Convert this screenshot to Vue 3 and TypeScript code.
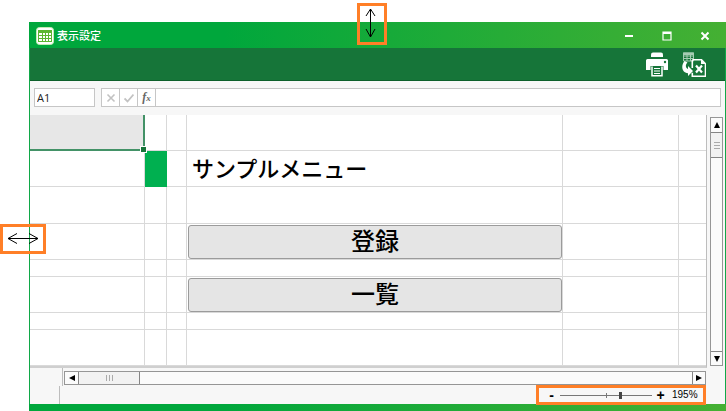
<script setup lang="ts">
import { computed, ref } from 'vue'

interface MenuRow {
  height: string
  kind: 'first' | 'title' | 'plain' | 'button'
  label?: string
}

const cellName = ref('A1')
const formula = ref('')
const zoom = ref(195)

const rows: MenuRow[] = [
  { height: 'mid', kind: 'first' },
  { height: 'mid', kind: 'title', label: 'サンプルメニュー' },
  { height: 'tall', kind: 'plain' },
  { height: 'mid', kind: 'button', label: '登録' },
  { height: 'short', kind: 'plain' },
  { height: 'mid', kind: 'button', label: '一覧' },
  { height: 'short', kind: 'plain' },
  { height: 'mid', kind: 'plain' },
]

// 100% sits in the middle of the slider: 10-100 on the left half, 100-400 on the right.
const sliderPosition = computed<number>({
  get: () => (zoom.value <= 100 ? ((zoom.value - 10) / 90) * 50 : 50 + ((zoom.value - 100) / 300) * 50),
  set: (p) => {
    zoom.value = Math.round(p <= 50 ? 10 + (p / 50) * 90 : 100 + ((p - 50) / 50) * 300)
  },
})

function step(amount: number) {
  zoom.value = Math.min(400, Math.max(10, zoom.value + amount))
}
</script>

<template>
  <div class="page">
    <main class="window">
      <header class="titlebar">
        <svg class="app-icon" viewBox="0 0 18 18" aria-hidden="true">
          <rect x="0.5" y="0.5" width="17" height="17" rx="3" fill="#fff" stroke="#c5eab5" />
          <rect x="2" y="3" width="14" height="12" fill="#5cb531" />
          <path d="M3 6h3v2H3zM7 6h2v2H7zM10 6h2v2h-2zM13 6h2v2h-2zM3 9h3v2H3zM7 9h2v2H7zM10 9h2v2h-2zM13 9h2v2h-2zM3 12h3v2H3zM7 12h2v2H7zM10 12h2v2h-2zM13 12h2v2h-2z" fill="#fff" />
        </svg>
        <h1 class="title">表示設定</h1>
        <div class="controls">
          <button type="button" aria-label="最小化">
            <svg viewBox="0 0 10 10"><path d="M1 5h8" stroke="#fff" stroke-width="2" /></svg>
          </button>
          <button type="button" aria-label="最大化">
            <svg viewBox="0 0 10 10"><path d="M1 1h8v8H1z" fill="none" stroke="#fff" stroke-width="1.2" /><path d="M1 1h8v2H1z" fill="#fff" /></svg>
          </button>
          <button type="button" aria-label="閉じる">
            <svg viewBox="0 0 10 10"><path d="M1.500 1.500l7 7M8.500 1.500l-7 7" stroke="#fff" stroke-width="2" /></svg>
          </button>
        </div>
      </header>

      <div class="toolbar">
        <button type="button" aria-label="印刷">
          <svg class="print" viewBox="0 0 22 25">
            <path d="M5 5V2.500Q5 0.500 7 0.500h8Q17 0.500 17 2.500V5z" fill="#fff" />
            <path d="M1.500 7h19Q22 7 22 8.500V18h-4.500v-4h-13v4H0V8.500Q0 7 1.500 7z" fill="#fff" />
            <circle cx="19" cy="10" r="1.200" fill="#167539" />
            <path d="M6 14.500v9.300h10v-9.300" fill="none" stroke="#fff" stroke-width="1.500" />
            <path d="M8 16.500h6M8 19h6M8 21.500h6" stroke="#fff" stroke-width="1.200" />
          </svg>
        </button>
        <button type="button" aria-label="Excel出力">
          <svg class="export" viewBox="0 0 24 25">
            <path d="M1.500 1h10v8h-10zM1.500 4h10M1.500 6.500h10M5 2v7M8.500 2v7" fill="none" stroke="#a5cdb2" stroke-width="1" />
            <path d="M1 0.500h11v2.500H1z" fill="#a5cdb2" />
            <path d="M2.500 9C-1.500 14 0 20.500 6 21.200V24l5-5-5-5v3C3.500 16 3 13 5.500 10.500z" fill="#fff" />
            <path d="M10.300 7.800h9.200l4 4v12.400H10.300v-3.500M10.300 8v8" fill="none" stroke="#fff" stroke-width="1.600" />
            <path d="M19 7.500v4.500h4.500z" fill="#fff" />
            <path d="M14 13.500l6 7M20 13.500l-6 7" stroke="#fff" stroke-width="2.200" />
          </svg>
        </button>
      </div>

      <div class="formula-bar">
        <input v-model="cellName" class="name-box" aria-label="セル名" />
        <div class="formula">
          <button type="button" aria-label="キャンセル">
            <svg viewBox="0 0 10 10"><path d="M1.500 1.500l7 7M8.500 1.500l-7 7" stroke="#c2c2c2" stroke-width="1.600" /></svg>
          </button>
          <button type="button" aria-label="入力">
            <svg viewBox="0 0 10 10"><path d="M0.500 5.500l3 3 6-7" fill="none" stroke="#c2c2c2" stroke-width="1.800" /></svg>
          </button>
          <button type="button" class="fx" aria-label="関数の挿入"><span>f</span><small>x</small></button>
          <input v-model="formula" class="formula-input" aria-label="数式" />
        </div>
      </div>

      <div class="sheet-area">
        <table class="sheet">
          <colgroup>
            <col class="col-a" />
            <col class="col-b" />
            <col class="col-c" />
            <col />
            <col class="col-e" />
            <col class="col-f" />
          </colgroup>
          <tbody>
            <tr v-for="(row, i) in rows" :key="i" :class="row.height">
              <td :class="{ selected: row.kind === 'first' }"></td>
              <td :class="{ marker: row.kind === 'title' }"></td>
              <td></td>
              <td :class="{ heading: row.kind === 'title', action: row.kind === 'button' }">
                <button v-if="row.kind === 'button'" type="button">{{ row.label }}</button>
                <template v-else>{{ row.label }}</template>
              </td>
              <td></td>
              <td></td>
            </tr>
          </tbody>
        </table>
        <div class="scroll vertical">
          <button type="button" aria-label="上へ"><svg viewBox="0 0 8 8"><path d="M4 1l3 6H1z" /></svg></button>
          <div class="thumb"><i></i></div>
          <div class="track"></div>
          <button type="button" aria-label="下へ"><svg viewBox="0 0 8 8"><path d="M4 7L1 1h6z" /></svg></button>
        </div>
      </div>

      <div class="scroll-row">
        <div class="scroll horizontal">
          <button type="button" aria-label="左へ"><svg viewBox="0 0 8 8"><path d="M1 4l6-3v6z" /></svg></button>
          <div class="thumb"><i></i></div>
          <div class="track"></div>
          <button type="button" aria-label="右へ"><svg viewBox="0 0 8 8"><path d="M7 4L1 1v6z" /></svg></button>
        </div>
      </div>

      <footer class="status">
        <div class="status-left"></div>
        <div class="zoom">
          <button type="button" aria-label="縮小" @click="step(-5)">-</button>
          <input v-model.number="sliderPosition" type="range" min="0" max="100" step="any" aria-label="ズーム" />
          <button type="button" aria-label="拡大" @click="step(5)">+</button>
          <output>{{ zoom }}%</output>
        </div>
      </footer>
      <div class="bottom-edge"></div>
    </main>

    <div class="resize resize-y">
      <svg viewBox="0 0 24 36"><path d="M10.500 3v28M6 10l4.500-7 4.500 7M6 23l4.500 8 4.500-8" fill="none" stroke="#000" stroke-width="1" /></svg>
    </div>
    <div class="resize resize-x">
      <svg viewBox="0 0 40 24"><path d="M5 11.500h30M14 6.500l-9 5 9 5M26 6.500l9 5-9 5" fill="none" stroke="#000" stroke-width="1" /></svg>
    </div>
  </div>
</template>

<style>
body {
  margin: 0;
  background: #fff;
}
</style>

<style scoped>
* {
  box-sizing: border-box;
}

.page {
  position: relative;
  padding: 22px 0 0 29px;
  font-family: "Liberation Sans", "Noto Sans CJK JP", sans-serif;
  color: #000;
}

button,
input {
  margin: 0;
  padding: 0;
  border: 0;
  border-radius: 0;
  background: none;
  color: inherit;
  font: inherit;
}

button {
  display: flex;
  align-items: center;
  justify-content: center;
}

.window {
  display: flex;
  flex-direction: column;
  border-right: 1px solid #10a848;
  border-left: 1px solid #10a848;
  background: #f7f7f7;
}

.titlebar {
  display: flex;
  align-items: center;
  height: 26px;
  margin: 0 -1px;
  padding: 1px 11px 0 7px;
  background: linear-gradient(90deg, #00a73c 28%, #45b033);
}

.app-icon {
  width: 18px;
  height: 18px;
}

.title {
  margin: 0 0 0 3px;
  color: #fff;
  font-size: 11px;
  font-weight: 500;
  line-height: 16px;
}

.controls {
  display: flex;
  gap: 18px;
  margin-left: auto;
}

.controls button {
  width: 20px;
  height: 24px;
}

.controls svg {
  width: 10px;
  height: 10px;
}

.toolbar {
  display: flex;
  align-items: center;
  justify-content: flex-end;
  gap: 14px;
  height: 33px;
  padding-right: 19px;
  border-bottom: 1px solid #0d5f2a;
  background: #167539;
}

.print {
  width: 22px;
  height: 25px;
}

.export {
  width: 24px;
  height: 25px;
}

.formula-bar {
  display: flex;
  gap: 6px;
  height: 34px;
  padding: 7px 4px 8px;
}

.name-box {
  width: 61px;
  padding-left: 2px;
  border: 1px solid #c6c6c6;
  background: #fff;
  color: #222;
  font-family: "Open Sans", sans-serif;
  font-size: 11px;
}

.formula {
  display: flex;
  flex: 1;
  border: 1px solid #c6c6c6;
  background: #fff;
}

.formula button {
  width: 18px;
  border-right: 1px solid #c6c6c6;
}

.formula svg {
  width: 10px;
  height: 10px;
}

.formula .fx {
  align-items: baseline;
  color: #666;
  font-family: "Liberation Serif", serif;
  font-size: 12px;
  font-style: italic;
  font-weight: 700;
  line-height: 16px;
}

.fx small {
  font-size: 9px;
}

.formula-input {
  flex: 1;
  min-width: 0;
  padding: 0 4px;
  font-size: 11px;
}

.sheet-area {
  display: flex;
  gap: 3px;
  padding-right: 2px;
}

.sheet {
  flex: 1;
  width: 0;
  table-layout: fixed;
  border-collapse: separate;
  border-spacing: 0;
  border-right: 1px solid #bdbdbd;
  border-bottom: 2px solid #cfcfcf;
  background: #fff;
}

.col-a { width: 115px; }
.col-b { width: 22px; }
.col-c { width: 20px; }
.col-e { width: 116px; }
.col-f { width: 27px; }

.short { height: 17px; }
.mid { height: 36px; }
.tall { height: 37px; }

td {
  padding: 0;
  border: solid #d9d9d9;
  border-width: 0 1px 1px 0;
}

td:last-child {
  border-right: 0;
}

td.selected {
  position: relative;
  border-color: #439267;
  background: #e7e7e7;
  box-shadow: inset -1px -1px #439267;
}

td.selected::after {
  position: absolute;
  right: -3px;
  bottom: -3px;
  width: 5px;
  height: 5px;
  border: 1px solid #fff;
  background: #167539;
  content: "";
}

td.marker {
  border-color: #00b050;
  background: #00b050;
}

.heading {
  padding: 3px 0 0 5px;
  font-size: 22px;
  font-weight: 500;
  line-height: 32px;
  white-space: nowrap;
}

.action button {
  width: calc(100% - 1px);
  height: 34px;
  margin: 0 0 0 1px;
  border: 1px solid #9b9b9b;
  border-radius: 3px;
  background: #e5e5e5;
  font-size: 24px;
  font-weight: 500;
  line-height: 32px;
}

.scroll {
  display: flex;
  border: 1px solid #969696;
  background: #fbfbfb;
}

.scroll svg {
  width: 8px;
  height: 8px;
}

.track {
  flex: 1;
}

.thumb {
  display: flex;
  align-items: center;
  justify-content: center;
  background: #f2f2f2;
}

.vertical {
  flex-direction: column;
  width: 13px;
  margin: 2px 0;
}

.vertical button {
  height: 14px;
}

.vertical .thumb {
  height: 26px;
  border: solid #858585;
  border-width: 1px 0;
}

.vertical button:last-child {
  border-top: 1px solid #858585;
}

.thumb i {
  width: 6px;
  height: 7px;
  background: repeating-linear-gradient(#aaa 0 1px, transparent 1px 3px);
}

.scroll-row {
  display: flex;
  height: 18px;
  padding: 3px 19px 1px 32px;
  background: linear-gradient(#bdbdbd, #bdbdbd) 32px 0 / 1px 100% no-repeat;
}

.horizontal {
  flex: 1;
  margin-left: 2px;
}

.horizontal button {
  width: 13px;
}

.horizontal .thumb {
  width: 62px;
  border: solid #858585;
  border-width: 0 1px;
}

.horizontal .thumb i {
  width: 7px;
  height: 6px;
  background: repeating-linear-gradient(90deg, #aaa 0 1px, transparent 1px 3px);
}

.horizontal button:last-child {
  border-left: 1px solid #858585;
}

.status {
  display: flex;
  align-items: center;
  justify-content: space-between;
  height: 18px;
  padding-right: 19px;
}

.status-left {
  align-self: stretch;
  width: 30px;
  border-right: 1px solid #bdbdbd;
}

.zoom {
  position: relative;
  display: flex;
  align-items: center;
  height: 20px;
  width: 170px;
  padding-left: 4px;
  border: 3px solid #ff7f27;
}

.zoom button {
  width: 17px;
  height: 14px;
  font-size: 14px;
  font-weight: 700;
  line-height: 14px;
}

.zoom input {
  width: 92px;
  height: 10px;
  appearance: none;
  background:
    linear-gradient(#777, #777) center / 1px 5px no-repeat,
    linear-gradient(#777, #777) center / 100% 1px no-repeat;
}

.zoom input::-webkit-slider-thumb {
  width: 3px;
  height: 7px;
  appearance: none;
  background: #444;
}

.zoom output {
  margin-left: 3px;
  font-size: 10px;
  line-height: 14px;
}

.bottom-edge {
  height: 7px;
  margin: 0 -1px;
  background: linear-gradient(90deg, #00a73c 28%, #45b033);
}

.resize {
  position: absolute;
  display: flex;
  border: 3px solid #ff7f27;
}

.resize-y {
  top: 3px;
  left: 357px;
  width: 30px;
  height: 42px;
}

.resize-x {
  top: 224px;
  left: 0;
  width: 46px;
  height: 30px;
}
</style>
